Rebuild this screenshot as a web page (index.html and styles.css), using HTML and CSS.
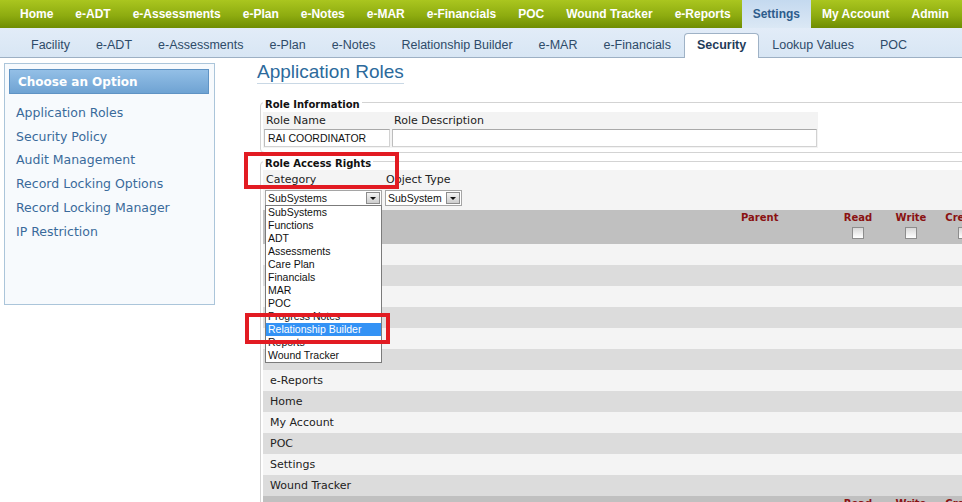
FILE: index.html
```html
<!DOCTYPE html>
<html lang="en">
<head>
  <meta charset="UTF-8">
  <title>Application Roles</title>
  <link rel="stylesheet" href="styles.css">
</head>
<body>

<div class="topnav">
  <a href="#">Home</a>
  <a href="#">e-ADT</a>
  <a href="#">e-Assessments</a>
  <a href="#">e-Plan</a>
  <a href="#">e-Notes</a>
  <a href="#">e-MAR</a>
  <a href="#">e-Financials</a>
  <a href="#">POC</a>
  <a href="#">Wound Tracker</a>
  <a href="#">e-Reports</a>
  <a href="#" class="active">Settings</a>
  <a href="#">My Account</a>
  <a href="#">Admin</a>
</div>

<div class="subnav">
  <a href="#">Facility</a>
  <a href="#">e-ADT</a>
  <a href="#">e-Assessments</a>
  <a href="#">e-Plan</a>
  <a href="#">e-Notes</a>
  <a href="#">Relationship Builder</a>
  <a href="#">e-MAR</a>
  <a href="#">e-Financials</a>
  <a href="#" class="active">Security</a>
  <a href="#">Lookup Values</a>
  <a href="#">POC</a>
</div>

<div class="page">
  <div class="sidebar">
    <div class="sidebar-title">Choose an Option</div>
    <ul class="options">
      <li><a href="#">Application Roles</a></li>
      <li><a href="#">Security Policy</a></li>
      <li><a href="#">Audit Management</a></li>
      <li><a href="#">Record Locking Options</a></li>
      <li><a href="#">Record Locking Manager</a></li>
      <li><a href="#">IP Restriction</a></li>
    </ul>
  </div>

  <div class="main">
    <h1>Application Roles</h1>

    <fieldset class="group">
      <legend>Role Information</legend>
      <div class="role-info">
        <div class="field">
          <label>Role Name</label>
          <input type="text" class="text-input name-input" value="RAI COORDINATOR">
        </div>
        <div class="field">
          <label>Role Description</label>
          <input type="text" class="text-input desc-input" value="">
        </div>
      </div>
    </fieldset>

    <fieldset class="group access">
      <legend>Role Access Rights</legend>
      <div class="access-body">
        <div class="filters">
          <div class="field">
            <label>Category</label>
            <div class="select category-select">
              <span class="select-value">SubSystems</span>
              <span class="select-arrow"></span>
              <ul class="dropdown">
                <li>SubSystems</li>
                <li>Functions</li>
                <li>ADT</li>
                <li>Assessments</li>
                <li>Care Plan</li>
                <li>Financials</li>
                <li>MAR</li>
                <li>POC</li>
                <li>Progress Notes</li>
                <li class="selected">Relationship Builder</li>
                <li>Reports</li>
                <li>Wound Tracker</li>
              </ul>
            </div>
          </div>
          <div class="field">
            <label>Object Type</label>
            <div class="select type-select">
              <span class="select-value">SubSystem</span>
              <span class="select-arrow"></span>
            </div>
          </div>
        </div>

        <div class="rights">
          <div class="rights-head">
            <div class="col-name"></div>
            <div class="col-parent">Parent</div>
            <div class="col-check">Read<input type="checkbox" class="box"></div>
            <div class="col-check col-write">Write<input type="checkbox" class="box"></div>
            <div class="col-check">Create<input type="checkbox" class="box"></div>
          </div>
          <div class="right-row">e-ADT</div>
          <div class="right-row">e-Assessments</div>
          <div class="right-row">e-Financials</div>
          <div class="right-row">e-MAR</div>
          <div class="right-row">e-Notes</div>
          <div class="right-row">e-Plan</div>
          <div class="right-row">e-Reports</div>
          <div class="right-row">Home</div>
          <div class="right-row">My Account</div>
          <div class="right-row">POC</div>
          <div class="right-row">Settings</div>
          <div class="right-row">Wound Tracker</div>
          <div class="rights-head">
            <div class="col-name"></div>
            <div class="col-parent"></div>
            <div class="col-check">Read<input type="checkbox" class="box"></div>
            <div class="col-check col-write">Write<input type="checkbox" class="box"></div>
            <div class="col-check">Create<input type="checkbox" class="box"></div>
          </div>
        </div>
      </div>
    </fieldset>
  </div>

  <div class="mark mark-category"></div>
  <div class="mark mark-item"></div>
</div>

</body>
</html>
```

FILE: styles.css
```css
* { box-sizing: border-box; }
body { margin: 0; background: #fff; color: #222; font-family: "DejaVu Sans", Verdana, sans-serif; font-size: 11px; overflow: hidden; }
a { text-decoration: none; }
ul { list-style: none; margin: 0; padding: 0; }

.topnav { display: flex; height: 28px; padding-left: 9px; background: linear-gradient(#aac61f, #8eac10 55%, #6f8d02); }
.topnav a { padding: 0 11px; font: bold 12px/28px "Liberation Sans", Arial, sans-serif; color: #fff; white-space: nowrap; }
.topnav a.active { background: linear-gradient(#c4d9ef, #dbe8f5); color: #2d5c8c; }

.subnav { display: flex; align-items: flex-start; height: 30px; padding-left: 18px; background: linear-gradient(#e2ecf8, #d8e6f4); border-bottom: 1px solid #9db0c4; }
.subnav a { height: 29px; padding: 5px 13px 0; font: 12.5px/24px "Liberation Sans", Arial, sans-serif; color: #2e4b69; white-space: nowrap; }
.subnav a.active { height: 25px; margin-top: 5px; padding: 0 12px; line-height: 22px; background: #fff; border: 1px solid #9fb2c6; border-bottom: none; border-radius: 4px 4px 0 0; font-weight: bold; color: #1f3c5a; }

.page { display: flex; position: relative; }

.sidebar { flex-shrink: 0; width: 211px; height: 242px; margin: 5px 0 0 4px; padding: 5px 5px 0 4px; border: 1px solid #abc5da; background: #f7fafd; }
.sidebar-title { height: 25px; padding: 1px 0 0 8px; border: 1px solid #5f93c4; background: linear-gradient(#93bfe6, #6fa3d3); font: bold 12px/22px "DejaVu Sans", Verdana, sans-serif; color: #fff; }
.options { padding: 7px 0 0 7px; }
.options a { display: block; font-size: 12.5px; line-height: 23.7px; color: #3a6a9b; white-space: nowrap; }

.main { flex-shrink: 0; width: 800px; margin-left: 42px; }
.main h1 { width: fit-content; margin: 3px 0 0; font: normal 19px/22px "Liberation Sans", Arial, sans-serif; color: #2c6a9c; border-bottom: 1px solid #c9d8e5; }

.group { margin: 10px 0 0 3px; padding: 2px 2px 4px; min-width: 0; border: 1px solid #d3d3d3; border-radius: 4px; }
.group legend { padding: 6px 2px 0; font: bold 10px/10px "DejaVu Sans", Verdana, sans-serif; color: #111; }
.group.access { margin-top: 0; padding-top: 1px; }

.field label { display: block; padding-left: 2px; line-height: 14px; color: #222; }

.role-info { display: flex; gap: 2px; width: fit-content; padding: 2px 1px 1px; background: #f3f3f3; }
.role-info label { margin-bottom: 1px; }
.text-input { display: block; height: 18px; margin: 0; padding: 0 3px; border: 1px solid #d2d2d2; border-top-color: #a9a9a9; border-left-color: #bdbdbd; background: #fff; font: 10.5px "Liberation Sans", Arial, sans-serif; color: #111; outline: none; }
.name-input { width: 126px; }
.desc-input { width: 425px; }

.access-body { background: #f4f4f4; }
.filters { display: flex; gap: 3px; padding-left: 2px; }
.filters label { padding: 3px 0 0 1px; margin-bottom: 3px; }

.select { position: relative; display: flex; align-items: center; height: 16px; padding-left: 2px; border: 1px solid #a5a5a5; background: #fff; font: 10.5px/13px "Liberation Sans", Arial, sans-serif; color: #111; }
.select-value { flex: 1; white-space: nowrap; }
.select-arrow { display: flex; align-items: center; justify-content: center; width: 14px; height: 12px; margin-right: 1px; border: 1px solid #8c8c8c; background: linear-gradient(#f4f4f4, #cdcdcd); }
.select-arrow::after { content: ""; border-left: 3px solid transparent; border-right: 3px solid transparent; border-top: 3px solid #111; }
.category-select { width: 117px; }
.type-select { width: 77px; }

.dropdown { position: absolute; z-index: 2; top: 14px; left: -1px; width: 117px; border: 1px solid #7b7b7b; background: #fff; }
.dropdown li { height: 13px; padding-left: 2px; line-height: 13px; white-space: nowrap; overflow: hidden; }
.dropdown li.selected { background: #3392f5; color: #fff; }

.rights { margin-top: 4px; }
.rights-head { display: flex; height: 34px; padding-top: 2px; background: #c0c0c0; font: bold 10px/12px "DejaVu Sans", Verdana, sans-serif; color: #8a1212; }
.col-name { width: 472px; }
.col-parent { width: 100px; padding-left: 6px; }
.col-check { width: 46px; text-align: center; }
.col-write { width: 60px; }
.box { display: block; width: 12px; height: 12px; margin: 3px auto 0; appearance: none; border: 1px solid #8d8d8d; background: linear-gradient(#d8d8d8, #fff); }

.right-row { height: 21px; padding-left: 7px; line-height: 21px; background: #f4f4f4; color: #222; white-space: nowrap; }
.right-row:nth-child(odd) { background: #dcdcdc; }

.mark { position: absolute; z-index: 3; border: 4px solid #e21b22; }
.mark-category { left: 244px; top: 94px; width: 155px; height: 37px; }
.mark-item { left: 245px; top: 255px; width: 145px; height: 31px; }
```
